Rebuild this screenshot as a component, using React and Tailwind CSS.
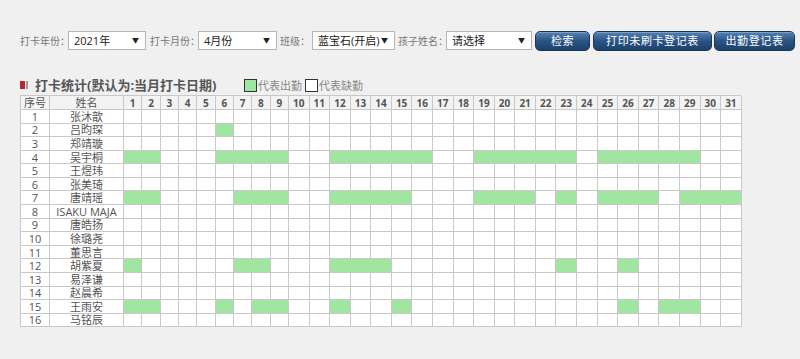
import React from "react";

const names = ["张沐歆","吕昀琛","郑靖璇","吴宇桐","王煜玮","张美琦","唐靖瑶","ISAKU MAJA","唐皓扬","徐璐尧","董思言","胡紫夏","易泽谦","赵晨希","王雨安","马铭辰"];
const greens = {
  2: [6],
  4: [1,2,6,7,8,9,12,13,14,15,16,19,20,21,22,23,25,26,27,28,29],
  7: [1,2,7,8,9,12,13,14,15,19,20,21,23,25,26,27,29,30,31],
  12: [1,7,8,12,13,14,23,26],
  15: [1,2,6,8,9,12,15,26,28,29],
};
const days = Array.from({ length: 31 }, (_, i) => i + 1);

function Select({ w, text }) {
  return (
    <div className={`${w} shrink-0 h-[19px] bg-white border border-[#b5b5b5] flex items-center justify-between pl-[5px] pr-[6px]`}>
      <span className="text-[11px] text-[#222] leading-none whitespace-nowrap">{text}</span>
      <span className="text-[7px] text-[#222] leading-none">▼</span>
    </div>
  );
}

function Label({ w, ml, text }) {
  return (
    <div className={`${w} ${ml} shrink-0 text-[10px] text-[#777] leading-none whitespace-nowrap`}>{text}</div>
  );
}

function Btn({ w, text, ml }) {
  return (
    <div className={`${w} ${ml} shrink-0 h-[20px] rounded-[5px] border border-[#17375a] bg-gradient-to-b from-[#5683b3] via-[#2a5484] to-[#1c426d] flex items-center justify-center text-white text-[11px] leading-none tracking-[0.6px] whitespace-nowrap shadow-[inset_0_1px_0_rgba(255,255,255,0.25)]`}>
      {text}
    </div>
  );
}

export default function App() {
  return (
    <div className="w-[800px] h-[359px] bg-[#f0f0f0] font-['Open_Sans','Noto_Sans_CJK_SC',sans-serif] pl-[20px] pt-[30px] overflow-hidden">
      <div className="flex items-center h-[21px]">
        <Label w="w-[48px]" ml="" text="打卡年份：" />
        <Select w="w-[78px]" text="2021年" />
        <Label w="w-[48px]" ml="ml-[4px]" text="打卡月份：" />
        <Select w="w-[79px]" text="4月份" />
        <Label w="w-[32px]" ml="ml-[3px]" text="班级：" />
        <Select w="w-[83px]" text="蓝宝石(开启)" />
        <Label w="w-[48px]" ml="ml-[3px]" text="孩子姓名：" />
        <Select w="w-[86px]" text="请选择" />
        <Btn w="w-[55px]" ml="ml-[3px]" text="检索" />
        <Btn w="w-[119px]" ml="ml-[3px]" text="打印未刷卡登记表" />
        <Btn w="w-[81px]" ml="ml-[2px]" text="出勤登记表" />
      </div>

      <div className="flex items-center h-[16px] mt-[26px]">
        <div className="w-[224px] flex items-center">
          <div className="w-[5px] h-[8px] bg-[#b5282e]" />
          <div className="w-[2px] h-[8px] bg-[#999] ml-[1px]" />
          <div className="ml-[7px] text-[13px] font-bold text-[#555] leading-none whitespace-nowrap">打卡统计(默认为:当月打卡日期)</div>
        </div>
        <div className="w-[13px] h-[13px] bg-[#a0e6a0] border border-[#333]" />
        <div className="text-[11px] text-[#888] leading-none ml-[1px]">代表出勤</div>
        <div className="w-[13px] h-[13px] bg-white border border-[#333] ml-[3px]" />
        <div className="text-[11px] text-[#888] leading-none ml-[1px]">代表缺勤</div>
      </div>

      <div className="mt-[2px] w-[721px] grid grid-cols-[29px_74px_repeat(9,18.33px)_repeat(22,20.59px)] grid-rows-[14px_repeat(16,13.58px)] border-l border-t border-[#c8c8c8]">
        <div className="bg-[#f3f3f3] border-r border-b border-[#c8c8c8] flex items-center justify-center text-[11px] text-[#555] leading-none">序号</div>
        <div className="bg-[#f3f3f3] border-r border-b border-[#c8c8c8] flex items-center justify-center text-[11px] text-[#555] leading-none">姓名</div>
        {days.map((d) => (
          <div key={"h" + d} className="bg-[#f3f3f3] border-r border-b border-[#c8c8c8] flex items-center justify-center text-[10px] font-bold text-[#555] leading-none">{d}</div>
        ))}
        {names.map((n, i) => {
          const r = i + 1;
          const g = greens[r] || [];
          return (
            <React.Fragment key={"r" + r}>
              <div className="bg-white border-r border-b border-[#c8c8c8] flex items-center justify-center text-[11px] text-[#555] leading-none">{r}</div>
              <div className="bg-white border-r border-b border-[#c8c8c8] flex items-center justify-center text-[11px] text-[#555] leading-none whitespace-nowrap">{n}</div>
              {days.map((d) => {
                const on = g.includes(d);
                const nextOn = g.includes(d + 1);
                return (
                  <div
                    key={r + "-" + d}
                    className={
                      on
                        ? nextOn
                          ? "bg-[#a0e6a0] border-r border-b border-r-[#a0e6a0] border-b-[#c8c8c8]"
                          : "bg-[#a0e6a0] border-r border-b border-[#c8c8c8]"
                        : "bg-white border-r border-b border-[#c8c8c8]"
                    }
                  />
                );
              })}
            </React.Fragment>
          );
        })}
      </div>
    </div>
  );
}
